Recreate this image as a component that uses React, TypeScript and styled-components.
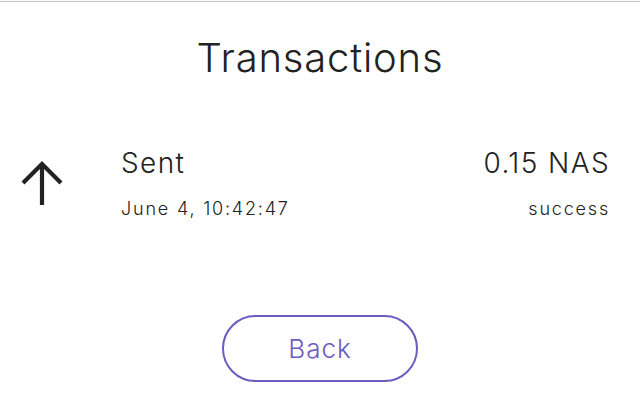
import React from "react";
import styled, { createGlobalStyle } from "styled-components";

const Global = createGlobalStyle`
  html, body { margin: 0; padding: 0; background: #fff; }
  body { font-family: "Inter", "Open Sans", sans-serif; color: #222; }
`;

const Page = styled.div`
  width: 640px;
  height: 400px;
  box-sizing: border-box;
  padding-top: 1px;
  display: flex;
  flex-direction: column;
  align-items: center;
`;

const TopRule = styled.div`
  align-self: stretch;
  height: 1px;
  background: #c4c4c4;
`;

const Title = styled.h1`
  margin: 28px 0 0;
  font-family: "Inter", sans-serif;
  font-weight: 300;
  font-size: 40px;
  line-height: 56px;
  letter-spacing: 0.8px;
  color: #222;
`;

const Row = styled.div`
  align-self: stretch;
  margin-top: 60px;
  padding: 0 30px 0 21px;
  display: grid;
  grid-template-columns: 42px 1fr auto;
  column-gap: 58px;
  align-items: center;
`;

const Icon = styled.svg`
  width: 42px;
  height: 44px;
  display: block;
`;

const Col = styled.div<{ $right?: boolean }>`
  display: flex;
  flex-direction: column;
  align-items: ${(p) => (p.$right ? "flex-end" : "flex-start")};
  gap: 18px;
`;

const Big = styled.div`
  font-weight: 300;
  font-size: 28px;
  line-height: 34px;
  letter-spacing: 1.4px;
  color: #222;
`;

const Small = styled.div`
  font-weight: 300;
  font-size: 18px;
  line-height: 22px;
  letter-spacing: 1.8px;
  color: #222;
`;

const Button = styled.button`
  margin-top: 95px;
  width: 196px;
  height: 67px;
  border: 2px solid #6e5bbf;
  border-radius: 34px;
  background: #fff;
  color: #6e5bbf;
  font-family: "Inter", sans-serif;
  font-weight: 300;
  font-size: 26px;
  letter-spacing: 1px;
  cursor: pointer;
`;

export default function App() {
  return (
    <>
      <Global />
      <Page>
        <TopRule />
        <Title>Transactions</Title>
        <Row>
          <Icon viewBox="0 0 42 44" fill="none" stroke="#222" strokeWidth="4.2">
            <path d="M21 3 V44" />
            <path d="M2 22 L21 3 L40 22" strokeLinejoin="miter" />
          </Icon>
          <Col>
            <Big>Sent</Big>
            <Small>June 4, 10:42:47</Small>
          </Col>
          <Col $right>
            <Big>0.15 NAS</Big>
            <Small>success</Small>
          </Col>
        </Row>
        <Button>Back</Button>
      </Page>
    </>
  );
}
